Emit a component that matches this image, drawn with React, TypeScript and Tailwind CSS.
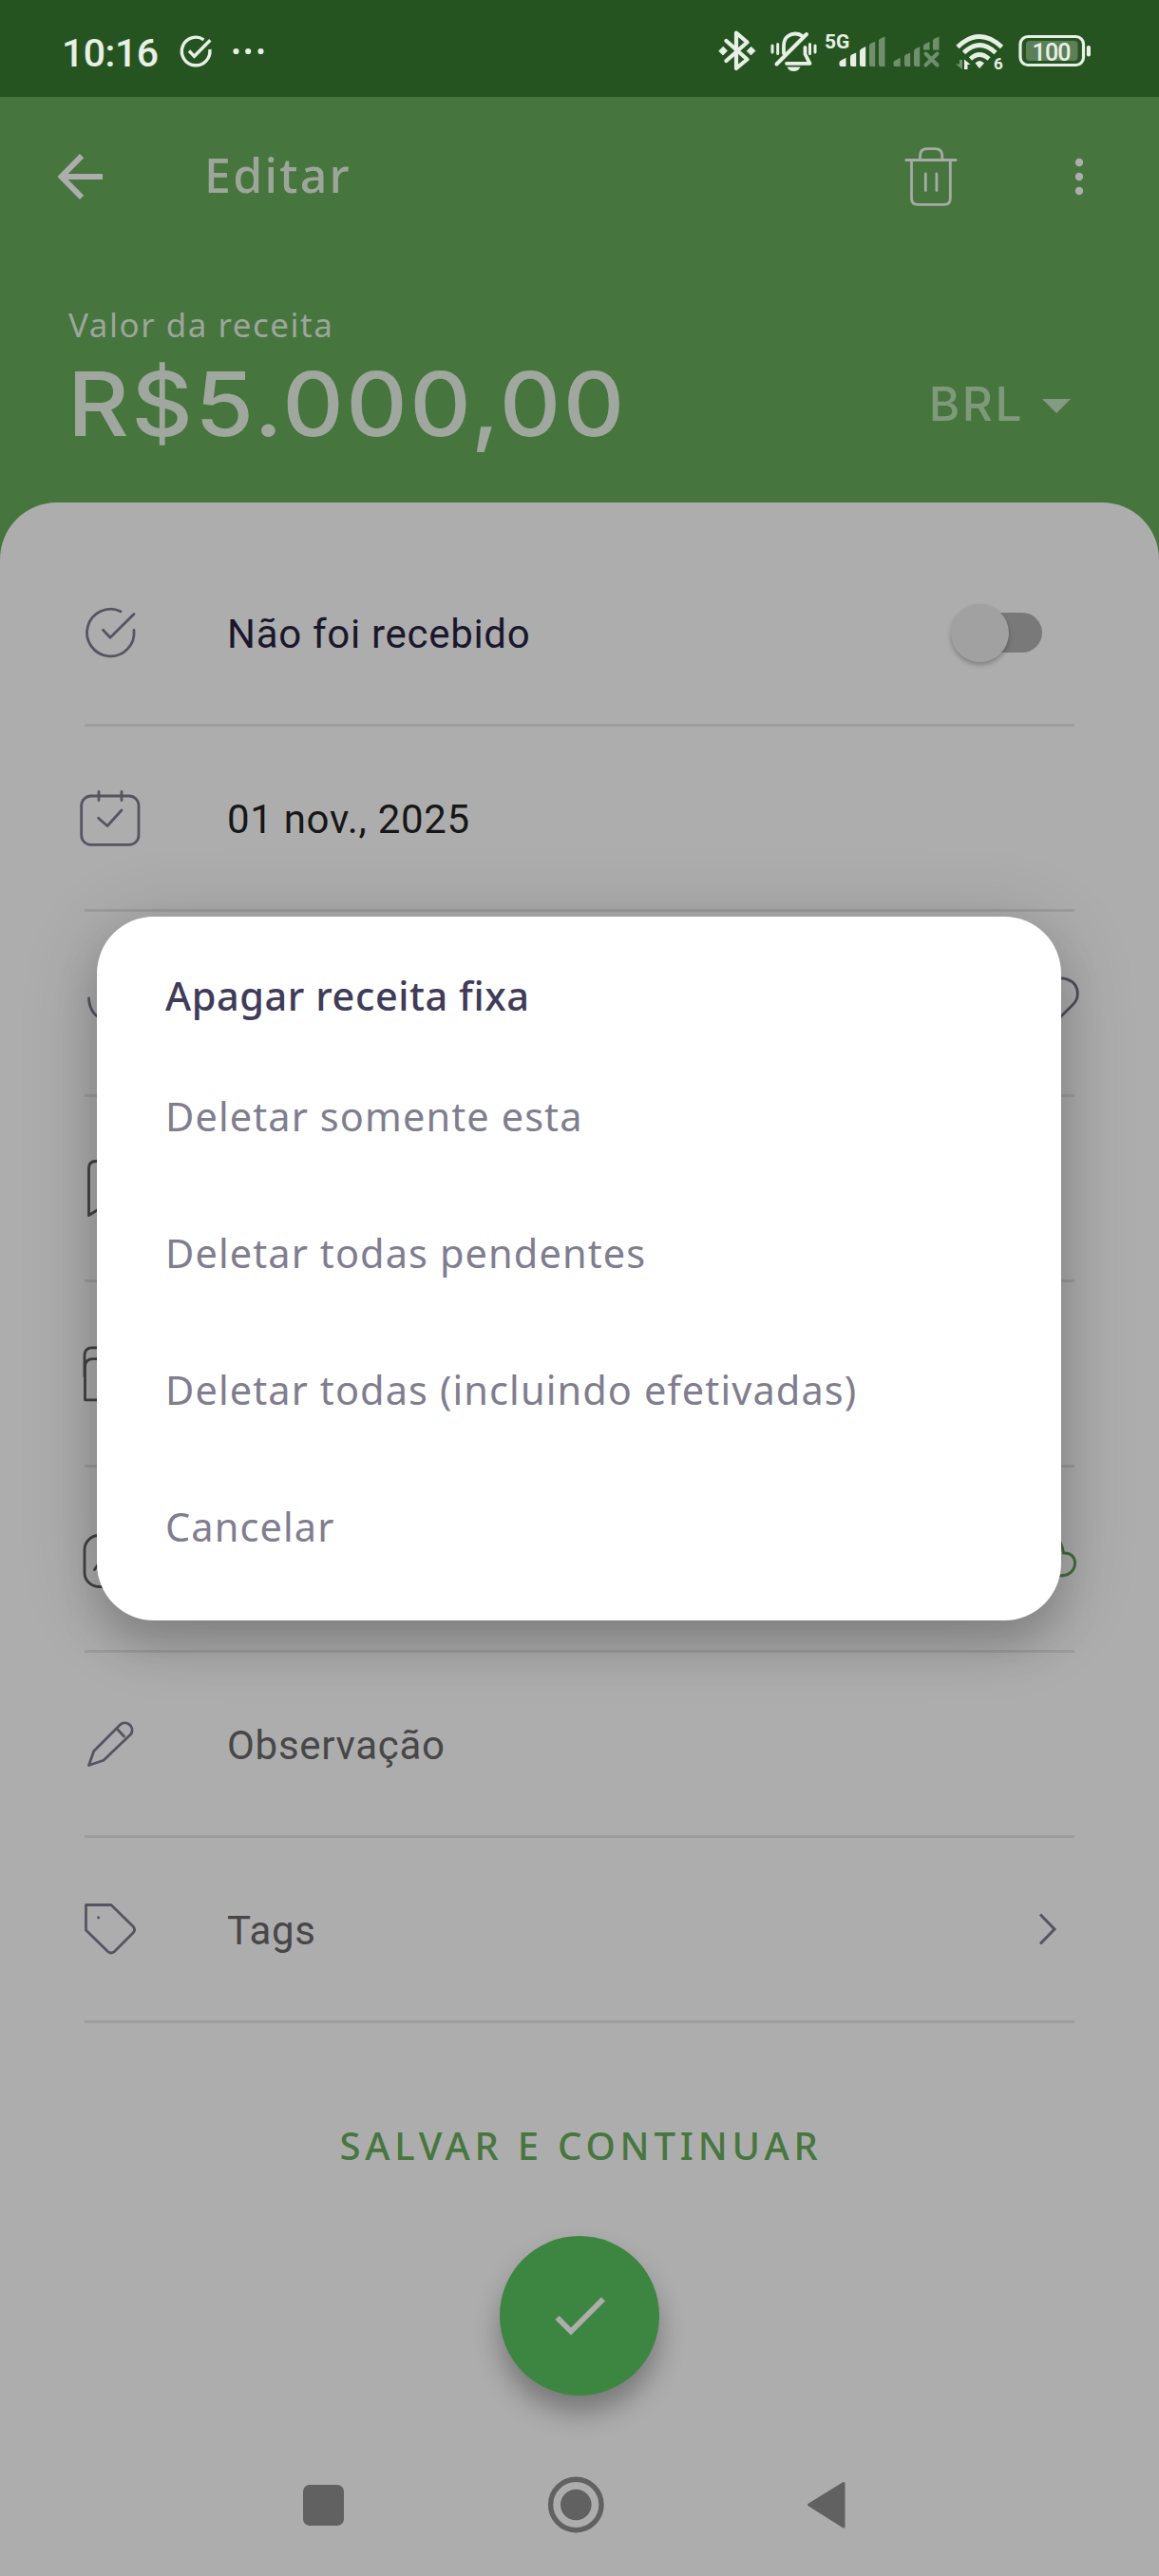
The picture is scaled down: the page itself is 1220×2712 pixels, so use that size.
import type { ReactNode } from "react";

type Box = [number, number, number, number];

// Every drawing uses screen coordinates for its viewBox: x, y, width, height.
function Icon({ box, className = "", children }: { box: Box; className?: string; children: ReactNode }) {
  return (
    <svg
      width={box[2]}
      height={box[3]}
      viewBox={box.join(" ")}
      className={`shrink-0 ${className}`}
      fill="none"
      stroke="currentColor"
      strokeWidth="2.8"
      strokeLinecap="round"
      strokeLinejoin="round"
    >
      {children}
    </svg>
  );
}

function StatusBar() {
  return (
    <div className="flex h-[102px] shrink-0 items-start bg-[#265421] text-[#e8f0e6]">
      <span className="ml-[65px] mt-[32px] w-[110px] whitespace-nowrap font-[Roboto] text-[41px] leading-[48px] font-medium tracking-[-0.5px]">
        10:16
      </span>
      <Icon box={[175, 0, 110, 102]}>
        <g strokeWidth="3.4" strokeLinecap="butt" strokeLinejoin="miter">
          <path d="M214.5 41.8A14.8 14.8 0 1 0 220.8 52" />
          <path d="M199 53.5L204.5 59.3L221.3 42.3" />
        </g>
        <g fill="currentColor" stroke="none">
          <circle cx="248.5" cy="54" r="3.1" />
          <circle cx="261.2" cy="54" r="3.1" />
          <circle cx="274.5" cy="54" r="3.1" />
        </g>
      </Icon>
      <span className="grow" />
      <Icon box={[750, 0, 470, 102]}>
        {/* bluetooth */}
        <path strokeWidth="4.2" d="M764.5 43L786.5 62.5L775 72V34.5L786.5 44.5L764.5 64" />
        <path fill="currentColor" strokeWidth="1" d="M757 53.5l4.2-4.2 4.2 4.2-4.2 4.2zM786.5 53.5l4.2-4.2 4.2 4.2-4.2 4.2z" />
        {/* muted bell */}
        <path strokeWidth="3.8" d="M825 56V48C825 38 833 35.5 837 35.5C839 35.5 842 36.2 844 37.6M847.5 50V57L852.5 66.8H828" />
        <path strokeWidth="4" d="M817.5 67.5L849 36" />
        <path fill="currentColor" stroke="none" d="M828.5 70.5H842.5C841 73.5 839 75 835.5 75S830 73.5 828.5 70.5Z" />
        <path strokeWidth="3" d="M813 48V55M818.7 46.5V56.5M852.5 46.5V56.5M858 48V55" />
        {/* cellular bars */}
        <g stroke="none" fill="currentColor">
          <path d="M883.5 66q0-1.5 1.5-2.2l5.5-3V70h-5q-2 0-2-2zM895 60q0-2 1.5-2.5l4.7-2V70H897q-2 0-2-2zM905 54q0-1.5 1.5-2.5l4.7-2.5V70H907q-2 0-2-2z" />
          <g opacity="0.38">
            <path d="M915 48q0-1.5 1.5-2.2l4.7-2V70H917q-2 0-2-2zM925 43q0-1.5 1.5-2.2l5-2.3V70H927q-2 0-2-2z" />
            <path d="M940.5 66q0-1.5 1.5-2.2l5.7-3V70h-5.2q-2 0-2-2zM952 60q0-2 1.5-2.5l4.7-2V70H954q-2 0-2-2zM962 54q0-1.5 1.5-2.5l4.7-2.5V70H964q-2 0-2-2zM972 48.5q0-1.5 1.5-2.2l5-2.3V52.5H972zM982 43q0-1.5 1.5-2.2l5-2.3V52.5H982z" />
          </g>
        </g>
        <path opacity="0.38" strokeWidth="4" d="M974.5 56.5L986.5 68.5M986.5 56.5L974.5 68.5" />
        {/* wifi */}
        <g strokeWidth="4.8" strokeLinecap="butt">
          <path d="M1008 49.5Q1031 27.5 1054.5 49.5" />
          <path d="M1014.5 55.5Q1031 39.5 1048 55.5" />
          <path d="M1021.5 62Q1031 53 1041 62" />
        </g>
        <path fill="currentColor" stroke="none" d="M1026.5 66.5Q1031 61.5 1036 66.5L1031 72Z" />
        <path fill="currentColor" stroke="none" opacity="0.4" d="M1013 63V73L1006 67.5H1010V63Z" />
        <path fill="currentColor" stroke="none" d="M1015 73V62.5L1021.5 68H1018.5V73Z" />
        {/* battery */}
        <rect x="1074" y="38.5" width="66.5" height="30" rx="8" strokeWidth="3.2" />
        <rect x="1080" y="43" width="54.5" height="21" rx="4" fill="currentColor" opacity="0.28" stroke="none" />
        <rect x="1143.8" y="48" width="4.2" height="11.5" rx="2" fill="currentColor" stroke="none" />
        <g fill="currentColor" stroke="none" className="font-[Roboto] font-bold">
          <text x="868" y="51" fontSize="21">5G</text>
          <text x="1046" y="73" fontSize="17">6</text>
          <text x="1086.5" y="64" fontSize="25" className="font-medium" textLength="41">100</text>
        </g>
      </Icon>
    </div>
  );
}

function Header() {
  return (
    <div className="flex h-[427px] shrink-0 flex-col text-[#adadad]">
      <div className="flex h-[168px] items-center">
        <Icon box={[48, 150, 72, 72]} className="ml-[48px]">
          <path strokeWidth="6" strokeLinecap="butt" strokeLinejoin="miter" d="M108 186H64M86.1 164.2L64.6 186L86.1 207.8" />
        </Icon>
        <span className="mb-[5px] ml-[95px] whitespace-nowrap font-['Noto_Sans'] text-[50px] leading-[60px] font-medium tracking-[2.3px] text-[#9ca69b]">
          Editar
        </span>
        <span className="grow" />
        <Icon box={[950, 152, 60, 68]} className="mr-[110px] text-[#a6aaa5]">
          <path d="M953.8 168.5H1006.2M968.5 168V164Q968.5 156.6 976 156.6H984.5Q991.8 156.6 991.8 164V168M959.5 169V209Q959.5 215.3 966 215.3H994Q1000.3 215.3 1000.3 209V169M974.3 183V200.5M985.9 183V200.5" />
        </Icon>
        <Icon box={[1120, 160, 32, 52]} className="mr-[68px]">
          <g fill="currentColor" stroke="none">
            <circle cx="1136" cy="171" r="4.2" />
            <circle cx="1136" cy="186" r="4.2" />
            <circle cx="1136" cy="201" r="4.2" />
          </g>
        </Icon>
      </div>
      <div className="mt-[48px] ml-[72px] whitespace-nowrap font-['Noto_Sans'] text-[35px] leading-[48px] tracking-[1.5px] text-[#9ca69b]">
        Valor da receita
      </div>
      <div className="mt-px flex h-[116px] items-center">
        <span className="ml-[71px] origin-left scale-x-[1.07] whitespace-nowrap font-[Inter] text-[93.5px] leading-[116px] font-medium tracking-[2.3px] text-[#9fa79e]">
          R$5.000,00
        </span>
        <span className="grow" />
        <span className="whitespace-nowrap font-[Inter] text-[49.5px] leading-[60px] font-medium tracking-[2.6px] text-[#7f9a7b]">
          BRL
        </span>
        <Icon box={[1090, 405, 42, 40]} className="ml-[12px] mr-[88px] text-[#839b80]">
          <path fill="currentColor" stroke="none" d="M1097 420H1127L1112 435Z" />
        </Icon>
      </div>
    </div>
  );
}

function Row({ icon, box, label, color = "", iconColor = "text-[#565461]", end }: {
  icon: ReactNode;
  box: Box;
  label?: string;
  color?: string;
  iconColor?: string;
  end?: ReactNode;
}) {
  return (
    <div className="flex h-[195px] shrink-0 flex-col">
      <div className="flex h-[192px] items-center">
        <div className={`flex w-[239px] shrink-0 pl-[80px] ${iconColor}`}>
          <Icon box={box}>{icon}</Icon>
        </div>
        <span className={`grow whitespace-nowrap pt-[4px] font-[Roboto] text-[42px] leading-[50px] tracking-[0.7px] ${color}`}>
          {label}
        </span>
        {end}
      </div>
      <div className="ml-[89px] h-[3px] w-[1042px] bg-[#9d9d9f]" />
    </div>
  );
}

function Form() {
  const dark = "text-[#424242]";
  return (
    <div className="flex grow flex-col rounded-t-[60px] bg-[#adadad] pt-[41px]">
      <Row
        box={[80, 631, 72, 70]}
        icon={<path d="M127 643.7A24.8 24.8 0 1 0 141 663.5M108.5 663.3L116 671.3L141 646.5" />}
        label="Não foi recebido"
        color="text-[#1a172d]"
        end={
          <div className="relative mr-[123px] h-[42px] w-[86px] rounded-full bg-[#797979]">
            <div className="absolute top-[-9px] left-[-10px] size-[61px] rounded-full bg-[#a1a1a1] shadow-[0_3px_5px_rgba(0,0,0,0.25)]" />
          </div>
        }
      />
      <Row
        box={[80, 826, 72, 70]}
        icon={
          <>
            <rect x="85.7" y="838" width="60.3" height="51.3" rx="10" />
            <path d="M104 833.5V842.5M128 833.5V842.5M103.5 861.3L113 869.5L128 853" />
          </>
        }
        label="01 nov., 2025"
        color="text-[#171717]"
      />
      <Row
        box={[80, 1021, 72, 70]}
        icon={<path d="M93.5 1051Q94.5 1070 112 1074.5H124" />}
        end={
          <Icon box={[1070, 1020, 72, 70]} className="mr-[78px] text-[#504e5b]">
            <path d="M1103 1034C1116 1024 1134.3 1030 1134.3 1045.5Q1134.3 1052 1129 1057L1103 1083" />
          </Icon>
        }
      />
      <Row
        box={[80, 1216, 72, 70]}
        iconColor={dark}
        icon={<path d="M130 1280L112 1268L93.5 1279.5V1230Q93.5 1222.5 101 1222.5H122Q130 1222.5 130 1230Z" />}
      />
      <Row
        box={[80, 1411, 72, 70]}
        iconColor={dark}
        icon={<path d="M89 1449V1427Q89 1418.8 97 1418.8H112L120 1430.5M89.5 1473.8V1439Q89.5 1430.7 98 1430.7H140V1473.8Z" />}
      />
      <Row
        box={[80, 1606, 72, 70]}
        iconColor={dark}
        icon={
          <>
            <rect x="89" y="1616.5" width="55" height="54" rx="15" />
            <path d="M99.5 1652.5L106 1643L118 1656L130 1640" />
          </>
        }
        end={
          <Icon box={[1070, 1606, 72, 70]} className="mr-[78px] text-[#426e39]">
            <path strokeWidth="3" d="M1100 1612Q1116 1614 1119.5 1635C1127 1634.5 1131.5 1639 1131.5 1645.5C1131.5 1653 1126 1659 1115 1659H1090" />
          </Icon>
        }
      />
      <Row
        box={[80, 1801, 72, 70]}
        icon={<path d="M93.5 1858.5L98.8 1843.5L126.5 1815.8C132 1810.5 142.5 1817 138 1825.5L109 1853.2ZM124 1821L130.5 1828" />}
        label="Observação"
        color="text-[#474747]"
      />
      <Row
        box={[80, 1996, 72, 70]}
        icon={
          <>
            <path d="M90.5 2005.5H117L140 2028Q143.3 2031.7 140 2035L120.5 2054.5Q117 2057.5 113.5 2054.5L90.5 2032Z" />
            <circle cx="103.6" cy="2018.8" r="1.5" fill="currentColor" stroke="none" />
          </>
        }
        label="Tags"
        color="text-[#474747]"
        end={
          <Icon box={[1080, 1996, 50, 70]} className="mr-[90px] text-[#565461]">
            <path strokeWidth="3" strokeLinecap="butt" strokeLinejoin="miter" d="M1095 2015.5L1110 2031L1095 2046.5" />
          </Icon>
        }
      />
      <div className="mt-[97px] flex h-[64px] items-center justify-center whitespace-nowrap pl-[3px] font-['Noto_Sans'] text-[40px] font-medium tracking-[4.8px] text-[#48763f]">
        SALVAR E CONTINUAR
      </div>
      <div className="mx-auto mt-[63px] flex size-[168px] items-center justify-center rounded-full bg-[#3d8642] text-[#adadad] shadow-[0_18px_28px_rgba(0,0,0,0.3)]">
        <Icon box={[574, 2402, 72, 72]}>
          <path strokeWidth="5.8" strokeLinecap="butt" strokeLinejoin="miter" d="M586.5 2440L601 2454.5L635 2420.5" />
        </Icon>
      </div>
      <div className="mt-[75px] flex h-[80px] items-center text-[#616161]">
        <span className="ml-[319px] h-[43px] w-[43px] rounded-[7px] bg-[#616161]" />
        <Icon box={[570, 2601, 72, 72]} className="ml-[208px]">
          <circle cx="606.3" cy="2637" r="26.7" strokeWidth="5.4" />
          <circle cx="606.3" cy="2637" r="16.3" fill="currentColor" stroke="none" />
        </Icon>
        <Icon box={[842, 2601, 56, 72]} className="ml-[200px]">
          <path fill="currentColor" strokeWidth="3" d="M851.5 2637L888 2614.5V2660Z" />
        </Icon>
      </div>
    </div>
  );
}

const options = ["Deletar somente esta", "Deletar todas pendentes", "Deletar todas (incluindo efetivadas)", "Cancelar"];

function Dialog() {
  return (
    <div
      role="dialog"
      className="absolute top-[965px] left-[102px] flex h-[741px] w-[1015px] flex-col rounded-[60px] bg-white pl-[72px] font-['Noto_Sans'] whitespace-nowrap shadow-[0_26px_44px_rgba(0,0,0,0.17),0_8px_84px_rgba(0,0,0,0.16)]"
    >
      <h2 className="mt-[55px] text-[41.5px] leading-[56px] font-medium tracking-[0.55px] text-[#403b58]">Apagar receita fixa</h2>
      <div className="mt-[27px] flex flex-col">
        {options.map((option) => (
          <button key={option} className="h-[144px] text-left text-[41.5px] tracking-[1.1px] text-[#807d8f]">
            {option}
          </button>
        ))}
      </div>
    </div>
  );
}

export default function App() {
  return (
    <div className="relative flex h-[2712px] w-[1220px] flex-col overflow-hidden bg-[#47753e]">
      <StatusBar />
      <Header />
      <Form />
      <Dialog />
    </div>
  );
}
